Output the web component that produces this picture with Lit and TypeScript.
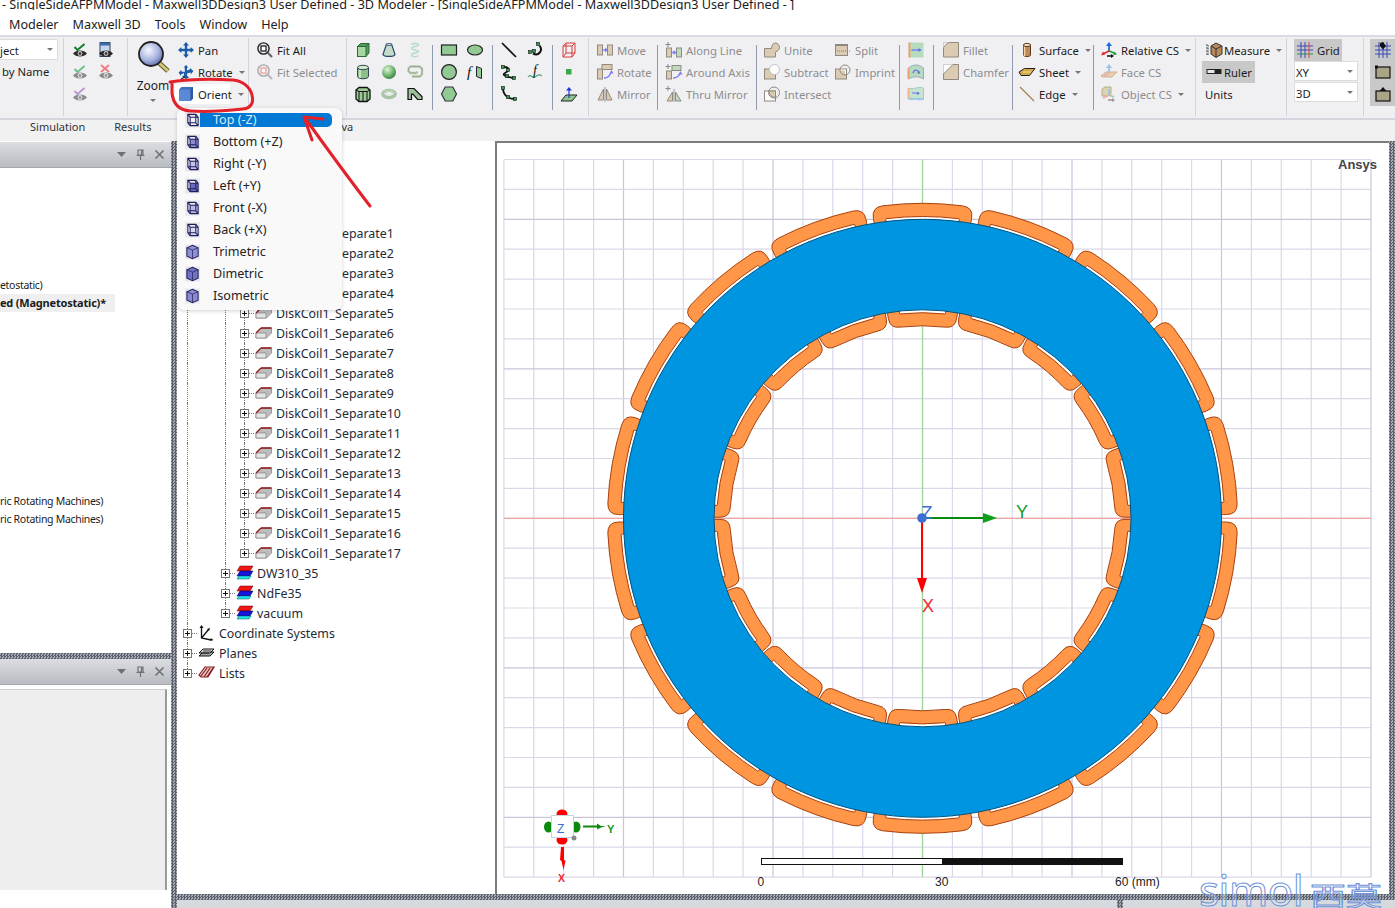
import { LitElement, html, css, svg, nothing, TemplateResult } from "lit";
import { customElement } from "lit/decorators.js";

// ---- ribbon icons, all on a 16x16 box ----
const eye = (c: string) => svg`<path d="M1 11.5c3-4 11-4 14 0c-3 4-11 4-14 0z" fill=${c}/><circle cx="8" cy="11.5" r="2.4" fill="#fff" opacity=".75"/><circle cx="8" cy="11.5" r="1.3" fill=${c}/>`;
const tick = (c: string) => svg`<path d="M2.5 5l3 3 7-6" fill="none" stroke=${c} stroke-width="2"/>`;
const TAN = "#d9c5a8";
const EDGE = "#80786c";
const ARW = "#6a6af0";
const box2 = (x: number, y: number, w: number, h: number, f = TAN) => svg`<rect x=${x} y=${y} width=${w} height=${h} fill=${f} stroke=${EDGE}/>`;
const node = (x: number, y: number) => svg`<rect x=${x - 1.5} y=${y - 1.5} width="3" height="3" fill="#2e9a4a" stroke="#111" stroke-width=".6"/>`;

const ICONS: Record<string, TemplateResult> = {
  eyeCheck: svg`${eye("#2a2a2a")}${tick("#0f7f2f")}`,
  eyeWin: svg`<rect x="2" y="0.5" width="10" height="14" fill="#c8d8ec" stroke="#345"/><rect x="2" y="0.5" width="10" height="3" fill="#3a6aa8"/>${eye("#2a2a2a")}`,
  eyeOk: svg`${eye("#8a8a8a")}${tick("#6fbf86")}`,
  eyeNo: svg`${eye("#8a8a8a")}<path d="M3 1l8 7M11 1l-8 7" stroke="#ef7f84" stroke-width="2"/>`,
  eyeMix: svg`${eye("#8a8a8a")}${tick("#b99ad0")}`,
  pan: svg`<path d="M8 0l3 3.4H9.2v3.4h3.4V5L16 8l-3.4 3v-1.8H9.2v3.4H11L8 16l-3-3.4h1.8V9.2H3.4V11L0 8l3.4-3v1.8h3.4V3.4H5z" fill="#1d5da8"/>`,
  rotate: svg`<path d="M8 1l2.4 2.6H9v3l3-1.4V4l3.4 3-2.6 3.4V8.6L9 9.4v2l2 2-3 1.6-4-2.4 2-1.4V9L3 10.4V12L.6 8.6 3.4 6v1.4l3.4.6V3.6H5.6z" fill="#1d5da8"/><path d="M3 15l4-2" stroke="#222" stroke-width="1.2"/>`,
  orient: svg`<path d="M1 3.5L3.5 1H15v11.5L12.5 15H1z" fill="#3d6fbf"/><path d="M1 3.5h11.5V15H1z" fill="#5a8ad6"/><path d="M12.5 3.5L15 1v11.5L12.5 15z" fill="#2f5a9e"/>`,
  fitAll: svg`<circle cx="6.5" cy="6.5" r="5.6" fill="#dfe6f2" stroke="#222" stroke-width="1.4"/><rect x="4" y="4" width="5" height="5" fill="#fff" stroke="#111" stroke-width="1.2"/><path d="M10.8 10.8l4.2 4.2" stroke="#666" stroke-width="2.2"/>`,
  fitSel: svg`<circle cx="6.5" cy="6.5" r="5.6" fill="#eef0f4" stroke="#9a9a9a" stroke-width="1.4"/><rect x="4" y="4" width="5" height="5" fill="#fff" stroke="#ea8c80" stroke-width="1.2"/><path d="M10.8 10.8l4.2 4.2" stroke="#b0b0b0" stroke-width="2.2"/>`,
  box: svg`<path d="M2.5 4.5L5.5 1.5H14V11L11 14.5H2.5z" fill="#4f9e5c" stroke="#2c6a3a"/><rect x="2.5" y="4.5" width="8.5" height="10" fill="#a8d6a0" stroke="#2c6a3a"/><path d="M11 4.5l3-3" stroke="#2c6a3a"/>`,
  cone: svg`<path d="M5.5 2h5l3.5 10.5c-1 2.6-11 2.6-12 0z" fill="#c6dccb" stroke="#27496a" stroke-width="1.2"/><ellipse cx="8" cy="2.6" rx="2.6" ry="1" fill="#e6f0e6" stroke="#27496a" stroke-width=".8"/>`,
  helix: svg`<path d="M4.5 2.5c3-2 7-1 7 .6s-7 1.4-7 3.2 7 1.4 7 3.2-7 1.4-7 3.2 4 2.8 7 1" fill="none" stroke="#b6dcc8" stroke-width="1.5"/>`,
  cyl: svg`<path d="M2.5 3.5v9c0 3 11 3 11 0v-9z" fill="#8dbf8a" stroke="#345" stroke-width="1"/><ellipse cx="8" cy="3.5" rx="5.5" ry="2.2" fill="#d4e8cf" stroke="#345"/><path d="M5 6v8" stroke="#d6ead2" stroke-width="1.6"/>`,
  sphere: svg`<circle cx="8" cy="8" r="7" fill="url(#ball)"/>`,
  spiral: svg`<path d="M5 12.5H13L15 10V4.5L12.5 2.5H3.5L1.5 4.5V7.5L3.5 9H9.5L10.5 7.5" fill="none" stroke="#b8c8ae" stroke-width="2.3"/><path d="M5 12.5H13L15 10V4.5L12.5 2.5H3.5L1.5 4.5V7.5L3.5 9H9.5" fill="none" stroke="#70806a" stroke-width=".4"/>`,
  prism: svg`<path d="M1 4l3-2.5h8l3 2.5v9l-3 2.5H4l-3-2.5z" fill="#9ccb98" stroke="#111" stroke-width="1.3"/><path d="M1 4l3 1.5h8l3-1.5M4 5.5v10M8 5.5v10M12 5.5v10" fill="none" stroke="#111" stroke-width="1"/>`,
  torus: svg`<ellipse cx="8" cy="8" rx="6.2" ry="3.6" fill="none" stroke="#a8c4a4" stroke-width="3.4"/><ellipse cx="8" cy="6.8" rx="5" ry="2" fill="none" stroke="#d6e6d2" stroke-width=".8"/>`,
  bond: svg`<path d="M1 2.5h6l8 8v3h-4.5L6 8.2H4.5v5.3H1z" fill="#9cc09a" stroke="#111" stroke-width="1.2"/>`,
  rect: svg`<rect x=".5" y="3" width="15" height="10" fill="#93c993" stroke="#222" stroke-width="1.2"/>`,
  ell: svg`<ellipse cx="8" cy="8" rx="7.5" ry="5" fill="#93c993" stroke="#222" stroke-width="1.2"/>`,
  circ: svg`<circle cx="8" cy="8" r="7.4" fill="#93c993" stroke="#222" stroke-width="1.2"/>`,
  hex: svg`<path d="M4.2 1h7.6L15.5 8l-3.7 7H4.2L.5 8z" fill="#93c993" stroke="#334" stroke-width="1.2"/>`,
  fsurf: svg`<path d="M9.5 2.5l5 2v10l-5-2z" fill="#93c993" stroke="#223"/><text x="0" y="13" font-family="Liberation Serif" font-style="italic" font-size="15" fill="#111">f</text>`,
  line: svg`<path d="M1 1l14 14" stroke="#111" stroke-width="1.7"/>`,
  arcA: svg`<path d="M12.5 3.5c4 5-1 11-6.5 8" fill="none" stroke="#111" stroke-width="2"/>${node(11, 2)}${node(3, 10)}${node(7, 9)}`,
  spline: svg`<path d="M3 3c6 0 5 4 1 6s2 4 8 5" fill="none" stroke="#111" stroke-width="1.8"/>${node(2, 3)}${node(7, 6)}${node(6, 12)}${node(13, 14)}`,
  fcurve: svg`<path d="M1 13c3-4 4 2 7 0s4-3 7-1" fill="none" stroke="#5aa06a" stroke-width="1.2"/><text x="6" y="11" font-family="Liberation Serif" font-style="italic" font-size="14" fill="#111">f</text>`,
  arcB: svg`<path d="M2 2c0 7 5 11 12 11" fill="none" stroke="#111" stroke-width="1.8"/>${node(2, 2)}${node(7, 11)}${node(14, 13)}`,
  wire: svg`<path d="M2 4l3-3h9v10l-3 4H2zM2 4h9v11M11 4l3-3M5 1v10l-3 4M5 11h9" fill="none" stroke="#d83a3a"/>`,
  dot: svg`<rect x="5" y="5" width="5.5" height="5.5" fill="#3da648"/>`,
  plane: svg`<path d="M5 9h11l-5 6H0z" fill="#8fc48f" stroke="#222"/><path d="M8 12V3" stroke="#1a3ae0" stroke-width="1.2"/><path d="M8 1l3 3.5H5z" fill="#1a3ae0"/>`,
  move: svg`${box2(.5, 3, 5, 10)}${box2(10.5, 3, 5, 10)}<path d="M5 8h5" stroke=${ARW} stroke-width="1.3"/><path d="M11 8L8 5.5v5z" fill=${ARW}/>`,
  rot: svg`${box2(.5, 5, 5, 10)}${box2(5, .5, 10, 5)}<path d="M7 14c4 0 6-2 7-6" fill="none" stroke=${ARW} stroke-width="1.3"/><path d="M14.5 6l2 3.5h-4z" fill=${ARW}/>`,
  mirror: svg`<path d="M1 14L6.5 3v11zM15 14L9.5 3v11z" fill=${TAN} stroke=${EDGE}/><path d="M8 1v15" stroke="#888"/>`,
  along: svg`<path d="M2 0v5M-.5 2.5h5" stroke="#777"/>${box2(.5, 6, 5, 9)}${box2(10.5, 6, 5, 9, "#b6d8b8")}<path d="M5 10.5h5" stroke=${ARW} stroke-width="1.3"/><path d="M10.5 10.5l-3-2.5v5z" fill=${ARW}/>`,
  around: svg`<path d="M2 0v5M-.5 2.5h5" stroke="#777"/>${box2(.5, 7, 5, 8)}${box2(6, 1.5, 9, 5, "#b6d8b8")}<path d="M7 14c4 0 6-2 7-5" fill="none" stroke=${ARW} stroke-width="1.3"/><path d="M14.5 7l2 3.5h-4z" fill=${ARW}/>`,
  thru: svg`<path d="M2 0v5M-.5 2.5h5" stroke="#777"/><path d="M1 15L6.5 6v9z" fill=${TAN} stroke=${EDGE}/><path d="M15 15L9.5 6v9z" fill="#b6d8b8" stroke=${EDGE}/><path d="M8 3v13" stroke="#888"/>`,
  unite: svg`<path d="M.5 6.5H7.5C7.5 3 9.5 1 11.5 1s4 2 4 4.5-2 3.5-4 4.5V15H.5z" fill=${TAN} stroke=${EDGE}/>`,
  subtract: svg`${box2(.5, 5, 11, 10)}<circle cx="10.5" cy="5.5" r="5" fill="#fff" stroke="#bbb"/>`,
  intersect: svg`<rect x=".5" y="5" width="11" height="10" fill="#fff" stroke=${EDGE}/><circle cx="10" cy="6.5" r="5.5" fill="none" stroke=${EDGE}/><path d="M5.5 5h6v6a5 5 0 0 1-6-6z" fill=${TAN} stroke=${EDGE}/>`,
  split: svg`<rect x=".5" y="2.5" width="12" height="11" fill=${TAN} stroke=${EDGE}/><path d="M0 9h15" stroke="#666" stroke-dasharray="1 1"/><rect x=".5" y="2.5" width="12" height="1.5" fill="#777"/>`,
  imprint: svg`${box2(.5, 5, 11, 10)}<circle cx="10" cy="6" r="5" fill="none" stroke=${EDGE}/><path d="M5.5 6h5v4" fill="none" stroke="#fff"/>`,
  sweepA: svg`<rect x=".5" y=".5" width="15" height="15" fill="#b6dcc0"/><rect x=".5" y=".5" width="2" height="15" fill="#f0a070"/><path d="M3.5 8h9" stroke=${ARW} stroke-width="1.2"/><path d="M13.5 8l-3-2v4z" fill=${ARW}/>`,
  sweepB: svg`<path d="M.5 4c5-4 10-4 15 0v11c-5-3-10-3-15 0z" fill="#b6dcc0" stroke="#9ab"/><path d="M.5 4v11" stroke="#f0a070" stroke-width="2"/><path d="M5 9c1-4 5-4 6 0" fill="none" stroke=${ARW} stroke-width="1.2"/><path d="M12 10l-3-1 2.5-2z" fill=${ARW}/>`,
  sweepC: svg`<path d="M.5 2c5 2 10-2 15 0v11c-5-2-10 2-15 0z" fill="#c6e4d0" stroke="#9cc"/><path d="M.5 2v11" stroke="#f0b488" stroke-width="2"/><path d="M4 7h7" stroke=${ARW}/><path d="M12 7.5l-3-1.5v3z" fill=${ARW}/><path d="M.5 13c5-2 10 2 15 0" stroke="#9cc8ef" fill="none" stroke-width="1.5"/>`,
  fillet: svg`<rect x=".5" y=".5" width="4" height="4" fill="#eee" stroke="#ccc"/><path d="M.5 15V5.5C3 3 4 .5 7 .5h8.5V15z" fill=${TAN} stroke=${EDGE}/>`,
  chamfer: svg`<rect x=".5" y=".5" width="15" height="15" fill="#fff" stroke="#ccc"/><path d="M.5 15.500V10L10 .5h5.500v15z" fill=${TAN} stroke=${EDGE}/>`,
  surface: svg`<path d="M4.5 3v10c0 2 7 2 7 0V3z" fill="#c08a58" stroke="#5a3a20"/><path d="M5.5 4v10" stroke="#f0d0a8" stroke-width="1.5"/><ellipse cx="8" cy="3" rx="3.5" ry="1.6" fill="#efe0c8" stroke="#5a3a20"/>`,
  sheet: svg`<path d="M0 8L5.5 4.5H16L10.5 11.5H2z" fill="#d6a94a" stroke="#222"/><path d="M4 8h8" stroke="#f2dc96"/>`,
  edge: svg`<path d="M1 1l14 14" stroke="#a4805a" stroke-width="1.3"/>`,
  relCs: svg`<path d="M8 9V3" stroke="#1a6ae0" stroke-width="1.8"/><path d="M8 0l3 4H5z" fill="#1a6ae0"/><path d="M8 9L2 12" stroke="#e02828" stroke-width="1.8"/><path d="M0 13.5l2-4 2 3z" fill="#e02828"/><path d="M8 9l5 2" stroke="#1f9a3a" stroke-width="1.8"/><path d="M16 12.5l-4 .5 1.5-3.5z" fill="#1f9a3a"/><path d="M6 14h5" stroke="#111" stroke-width="1.5"/><path d="M13 14l-3-2v4z" fill="#111"/>`,
  faceCs: svg`<path d="M0 12l5-4h11l-5 5H2z" fill="#e8c8a4" stroke="#c8a880"/><path d="M8 9V3" stroke="#8abcf0" stroke-width="1.8"/><path d="M8 0l3 4H5z" fill="#8abcf0"/><path d="M8 9l-5 3" stroke="#f0a0a0" stroke-width="1.6"/>`,
  objCs: svg`<path d="M1 3l3-2h6v7l-3 2H1z" fill="#d8d0a0" stroke="#a8a478"/><path d="M8 9V3" stroke="#8abcf0" stroke-width="1.8"/><path d="M8 9l-6 3" stroke="#f0a0a0" stroke-width="1.8"/><path d="M8 9l5 2" stroke="#8ac89a" stroke-width="1.8"/><path d="M7 14h5" stroke="#888" stroke-width="1.5"/><path d="M14 14l-3-2v4z" fill="#888"/>`,
  measure: svg`<path d="M5 4l5-3 6 3v8l-6 3.5L5 12z" fill="#b8875a" stroke="#333"/><path d="M5 4l5 3 6-3M10 7v8" fill="none" stroke="#333"/><path d="M2 3v10M0 3h2M0 6h2M0 9h2M0 12h2" stroke="#333" stroke-dasharray="1 .5"/>`,
  ruler: svg`<rect x="0.5" y="5" width="15" height="5" fill="#222"/><rect x="1.5" y="6" width="7" height="3" fill="#e8e8e8"/>`,
  grid: svg`<path d="M0 4h16M0 8h16" stroke="#3a4ab8"/><path d="M0 12h16" stroke="#2e9a4a"/><path d="M4 0v16M8 0v16" stroke="#3a4ab8"/><path d="M12 0v16" stroke="#e04040"/>`,
  gridPt: svg`<path d="M0 4h16M0 8h16M0 12h16M4 0v16M8 0v16M12 0v16" stroke="#3a4ab8"/><path d="M5 1l3-1 3 4-3 3.5-3-3.5z" fill="#111"/>`,
  boxTop: svg`<rect x="1" y="3" width="14" height="11" fill="#a8a484" stroke="#111" stroke-width="1.2"/><rect x="0" y="1.5" width="3" height="3" fill="#111"/>`,
  boxUp: svg`<rect x="1" y="5" width="14" height="10" fill="#a8a484" stroke="#111" stroke-width="1.2"/><path d="M8 1l3.5 4h-7z" fill="#111"/>`,
};

// ---- orient menu cubes ----
const cube = (face: string, solid = false) => html`<svg class="cube" viewBox="0 0 16 16">
  <rect width="16" height="16" fill="#e8e8ee"/>
  ${solid
    ? svg`<path d="M8 .8l6 2.7v9L8 15.2l-6-2.7v-9z" fill=${face} stroke="#24245e" stroke-width="1.1"/><path d="M2 3.5L8 6l6-2.5M8 6v9" fill="none" stroke="#24245e" stroke-width=".8"/>`
    : svg`<path d="M5.5 5H14v9H5.5z" fill=${face}/><path d="M3 2h8.5L14 5v9H5.5L3 11zM5.5 5H14M5.5 5v9M5.5 5L3 2M3 11h8.5V2M11.5 11l2.5 3" fill="none" stroke="#1e1e5c" stroke-width="1.1"/>`}
</svg>`;
const VIEWS: [string, string, boolean][] = [
  ["Top (-Z)", "#f0f0fa", false],
  ["Bottom (+Z)", "#8c8cd0", false],
  ["Right (-Y)", "#c4c4ea", false],
  ["Left (+Y)", "#6a6ac0", false],
  ["Front (-X)", "#b8b8e6", false],
  ["Back (+X)", "#d8d8f0", false],
  ["Trimetric", "#8f8fd4", true],
  ["Dimetric", "#7272c4", true],
  ["Isometric", "#8a8ad0", true],
];

// ---- project tree ----
type Row = { depth: number; label: string; icon: string };
const treeRows: Row[] = [
  ...Array.from({ length: 17 }, (_, i) => ({ depth: 3, label: `DiskCoil1_Separate${i + 1}`, icon: "coil" })),
  { depth: 2, label: "DW310_35", icon: "mat" },
  { depth: 2, label: "NdFe35", icon: "mat" },
  { depth: 2, label: "vacuum", icon: "mat" },
  { depth: 0, label: "Coordinate Systems", icon: "cs" },
  { depth: 0, label: "Planes", icon: "planes" },
  { depth: 0, label: "Lists", icon: "lists" },
];
const TREE_ICONS: Record<string, TemplateResult> = {
  coil: svg`<path d="M1 13V8l5-5h10.5v5l-5 5z" fill="#bdbdbd" stroke="#8a8a8a" stroke-width=".8"/><path d="M1 8h10v5H1z" fill="#e4e4e4" stroke="#8a8a8a" stroke-width=".8"/><path d="M6 3h10.5" stroke="#8e1414" stroke-width="1.5"/><path d="M1 8l5-5" stroke="#8e1414" stroke-width="1.2"/>`,
  mat: svg`<path d="M4 1h13l-3 5H1z" fill="#f01414" stroke="#600" stroke-width=".5"/><path d="M4 6h13l-3 5H1z" fill="#1414e0" stroke="#004" stroke-width=".5"/><path d="M3 11h12l-2 3H1z" fill="#1ee6ee" stroke="#055" stroke-width=".5"/>`,
  cs: svg`<path d="M3.5 1v12L13 15M3.5 13L11 4" fill="none" stroke="#111" stroke-width="1.3"/><path d="M3.5 0l-2 3h4zM15.5 15l-3-2v3zM12 3l-3 1 2 2z" fill="#111"/>`,
  planes: svg`<path d="M1 11l4-4h11l-4 4z" fill="#aaa" stroke="#111"/><path d="M1 8l4-4h11l-4 4z" fill="#ddd" stroke="#111"/><path d="M3 8h8M5 6h8" stroke="#111" stroke-width=".8"/>`,
  lists: svg`<path d="M1 10l6-8h9l-6 10H3z" fill="#e8c8c8" stroke="#8a1c1c" stroke-width="1.2"/><path d="M3 11l6-8M6 12l6-9M9 12l6-9" stroke="#8a1c1c" stroke-width="1.2"/>`,
};

// ---- model geometry, in page coordinates ----
const CX = 922.5;
const CY = 518.3;
const P = (r: number, a: number) => `${(CX + r * Math.sin(a)).toFixed(2)} ${(CY - r * Math.cos(a)).toFixed(2)}`;
const sector = (r1: number, r2: number, a0: number, a1: number, c: number) =>
  `M${P(r2 - c, a0)}Q${P(r2, a0)} ${P(r2, a0 + c / r2)}A${r2} ${r2} 0 0 1 ${P(r2, a1 - c / r2)}Q${P(r2, a1)} ${P(r2 - c, a1)}` +
  `L${P(r1 + c, a1)}Q${P(r1, a1)} ${P(r1, a1 - c / r1)}A${r1} ${r1} 0 0 0 ${P(r1, a0 + c / r1)}Q${P(r1, a0)} ${P(r1 + c, a0)}Z`;
const rad = (d: number) => (d * Math.PI) / 180;
const coilAngles = Array.from({ length: 18 }, (_, i) => i * 20);
const STEP = 29.9;

const tool = (icon: string, label?: string, o: { dim?: boolean; caret?: boolean; cls?: string } = {}) => html`
  <div class="tool ${o.dim ? "dim" : ""} ${o.cls ?? ""}">
    <svg class="ic" viewBox="0 0 16 16">${ICONS[icon]}</svg>
    ${label ? html`<span class="lb">${label}</span>` : nothing}
    ${o.caret ? html`<i class="caret"></i>` : nothing}
  </div>`;
const iconCol = (...names: string[]) => html`<div class="col ico-col">${names.map((n) => (n ? tool(n) : html`<div class="tool"></div>`))}</div>`;
const sep = (dark = true) => html`<div class="sep ${dark ? "dark" : "light"}"></div>`;

@customElement("app-root")
export class AppRoot extends LitElement {
  static styles = css`
    :host {
      display: block;
      position: relative;
      width: 1395px;
      height: 908px;
      overflow: hidden;
      background: #fff;
      color: #1c1c1c;
      font-family: "Noto Sans", "Noto Sans CJK SC", sans-serif;
      font-size: 11.3px;
    }
    .title {
      height: 10px;
      overflow: hidden;
      font-size: 12.65px;
      line-height: 9px;
      padding-left: 2px;
      white-space: nowrap;
    }
    .menu {
      height: 25px;
      box-sizing: border-box;
      padding: 3px 0 0 9px;
      display: flex;
      align-items: center;
      font-size: 12.6px;
      gap: 14px;
    }
    .ribbon {
      height: 85px;
      box-sizing: border-box;
      padding-top: 2px;
      display: flex;
      background: #f0f0f3;
      border-top: 2px solid #dcdae3;
      border-bottom: 2px solid #d6d4de;
      overflow: hidden;
    }
    .sec {
      flex: none;
      display: flex;
      height: 67px;
      box-sizing: border-box;
    }
    .col {
      flex: none;
      display: flex;
      flex-direction: column;
    }
    .ico-col {
      width: 26px;
    }
    .tool {
      height: 22px;
      display: flex;
      align-items: center;
      white-space: nowrap;
    }
    .ic {
      flex: none;
      width: 16px;
      height: 16px;
      overflow: visible;
    }
    .lb {
      margin-left: 4px;
    }
    .dim {
      color: #8d8d8f;
    }
    .tool.dim .ic {
      opacity: 0.85;
    }
    .caret {
      width: 0;
      height: 0;
      margin-left: 6px;
      margin-top: 1px;
      border-left: 3px solid transparent;
      border-right: 3px solid transparent;
      border-top: 3px solid #777;
    }
    .sep {
      flex: none;
      width: 1px;
    }
    .sep.dark {
      height: 65px;
      margin-top: 6px;
      background: #8f9aae;
    }
    .sep.light {
      height: 78px;
      margin-top: -1px;
      background: #cfd3da;
    }
    .combo {
      height: 21px;
      box-sizing: border-box;
      display: flex;
      align-items: center;
      justify-content: space-between;
      background: #fff;
      border: 1px solid #dcdcdc;
      border-left: none;
      padding-right: 4px;
    }
    .combo span {
      margin-top: 2px;
    }
    .combo.small {
      width: 64px;
      height: 20px;
      border-left: 1px solid #dcdcdc;
      padding-left: 1px;
      margin-bottom: 1px;
    }
    .combo .caret {
      margin: 0;
    }
    .plain {
      height: 22px;
      display: flex;
      align-items: center;
      padding-left: 2px;
    }
    .zoom {
      width: 50px;
      align-items: center;
    }
    .zoom svg {
      width: 32px;
      height: 32px;
      margin-top: 2px;
      margin-left: 1px;
    }
    .zoom span {
      margin-top: 5px;
      font-size: 12px;
      line-height: 16px;
    }
    .zoom .caret {
      margin: 5px 0 0;
    }
    .white {
      background: #fff;
      margin-left: -3px;
      padding-left: 3px;
      width: 52px;
      height: 20px;
      margin-top: 1px;
    }
    .on {
      background: #c8c8c8;
    }
    .tool.ruler {
      width: 53px;
      padding-left: 4px;
      box-sizing: border-box;
    }
    .tool.ruler .lb,
    .tool.meas .lb {
      margin-left: 2px;
    }
    .tool.meas {
      padding-left: 4px;
    }
    .tool.grid {
      width: 48px;
      padding-left: 3px;
      box-sizing: border-box;
    }
    .stack {
      margin-left: 6px;
      width: 25px;
      align-items: center;
      background: #c8c8c8;
    }
    .tabs {
      height: 21px;
      display: flex;
      line-height: 14px;
      background: #f1f1f2;
      padding-left: 30px;
      color: #333;
      font-size: 11px;
    }
    .tabs span + span {
      margin-left: 29px;
    }
    .tabs span.far {
      margin-left: 190px;
    }
    .main {
      display: flex;
      height: 767px;
    }
    .hatch-v,
    .hatch-h {
      flex: none;
      background: conic-gradient(#5b6070 25%, #a8abb0 0 50%, #5b6070 0 75%, #a8abb0 0) 0 0 / 3px 3px;
    }
    .hatch-v {
      width: 6px;
    }
    .hatch-h {
      height: 6px;
    }
    .left {
      width: 171px;
      flex: none;
      display: flex;
      flex-direction: column;
      padding-top: 1px;
      box-sizing: border-box;
    }
    .phead {
      flex: none;
      height: 26px;
      box-sizing: border-box;
      display: flex;
      align-items: center;
      justify-content: flex-end;
      gap: 8px;
      padding-right: 6px;
      background: linear-gradient(#dbdde1, #b8bbc1);
      border-bottom: 1px solid #a6a7ab;
    }
    .phead svg {
      width: 11px;
      height: 11px;
    }
    .pbody {
      height: 485px;
      flex: none;
      overflow: hidden;
      font-size: 10.5px;
      padding-top: 108px;
      box-sizing: border-box;
      white-space: nowrap;
    }
    .pl {
      height: 18px;
      line-height: 18px;
      letter-spacing: -0.3px;
    }
    .pl.cur {
      width: 115px;
      background: #efefef;
      font-weight: 700;
      font-size: 11px;
      letter-spacing: -0.2px;
    }
    .pl.gapped {
      margin-top: 180px;
    }
    .pbody2 {
      flex: 1;
      padding: 4px 4px 0 0;
    }
    .pbody2 div {
      height: 200px;
      background: #eee;
      border-top: 1px solid #d0d0d0;
      border-right: 2px solid #9a9a9a;
    }
    .center {
      flex: 1;
      display: flex;
      flex-direction: column;
      min-width: 0;
    }
    .work {
      flex: none;
      height: 753px;
      display: flex;
    }
    .tree {
      width: 318px;
      flex: none;
      box-sizing: border-box;
      padding: 82px 0 0 1px;
      overflow: hidden;
      font-size: 12.4px;
      color: #1f2a38;
    }
    .row {
      height: 20px;
      display: flex;
      align-items: center;
    }
    .cell {
      flex: none;
      width: 19px;
      height: 20px;
      position: relative;
      box-sizing: border-box;
    }
    .cell.guide::before,
    .cell.stub::before {
      content: "";
      position: absolute;
      left: 9px;
      top: 0;
      bottom: 0;
      border-left: 1px dotted #777;
    }
    .cell.stub.end::before {
      bottom: 10px;
    }
    .cell.stub::after {
      content: "";
      position: absolute;
      left: 13px;
      right: 0;
      top: 10px;
      border-top: 1px dotted #777;
    }
    .exp {
      position: absolute;
      left: 5px;
      top: 6px;
      width: 9px;
      height: 9px;
      z-index: 1;
      box-sizing: border-box;
      border: 1px solid #777;
      background: linear-gradient(#111, #111) center / 5px 1px no-repeat, linear-gradient(#111, #111) center / 1px 5px no-repeat, #fff;
    }
    .ti {
      flex: none;
      width: 17px;
      height: 16px;
      margin-left: 1px;
      overflow: visible;
    }
    .tx {
      margin-left: 4px;
      white-space: nowrap;
    }
    .view {
      flex: none;
      width: 894px;
      box-sizing: border-box;
      border-left: 2px solid #7c7c7c;
      border-top: 2px solid #7c7c7c;
      background: #fff;
    }
    .view svg {
      display: block;
    }
    .foot {
      flex: 1;
      background: #d6d9de;
      display: flex;
      padding-left: 940px;
    }
    .omenu {
      position: absolute;
      z-index: 5;
      left: 177px;
      top: 108px;
      width: 165px;
      height: 202px;
      box-sizing: border-box;
      padding-top: 1px;
      background: #f9f9f9;
      border-radius: 7px;
      box-shadow: 0 1px 4px rgba(0, 0, 0, 0.18);
      font-size: 12.6px;
      color: #222;
    }
    .mi {
      height: 22px;
      display: flex;
      align-items: center;
      padding-left: 8px;
    }
    .cube {
      flex: none;
      width: 15px;
      height: 16px;
    }
    .mt {
      margin-left: 13px;
      width: 119px;
      height: 14px;
      line-height: 13px;
      white-space: nowrap;
    }
    .mi.sel .mt {
      margin-left: 0;
      width: 119px;
      padding-left: 13px;
      background: #0078d4;
      color: #d6ebff;
      border-radius: 0 5px 5px 0;
    }
    .marks {
      position: absolute;
      z-index: 6;
      left: 0;
      top: 0;
      pointer-events: none;
    }
    .wm {
      position: absolute;
      z-index: 6;
      left: 1199px;
      top: 861px;
      display: flex;
      align-items: baseline;
      gap: 7px;
      color: rgba(255, 255, 255, 0.25);
      -webkit-text-stroke: 1px #6f93d8;
      line-height: 44px;
    }
    .wm b {
      font: 400 42px "Noto Sans", sans-serif;
      letter-spacing: -0.5px;
    }
    .wm em {
      display: inline-block;
      font: 400 26px "Noto Sans CJK SC", sans-serif;
      transform: scaleX(1.38);
      transform-origin: left bottom;
    }
  `;

  renderRibbon() {
    return html`<div class="ribbon">
      <div class="sec" style="width:63px">
        <div class="col" style="width:58px">
          <div class="combo"><span>ject</span><i class="caret"></i></div>
          <div class="plain">by Name</div>
        </div>
      </div>
      ${sep(false)}
      <div class="sec" style="width:63px;padding-left:8px">
        ${iconCol("eyeCheck", "eyeOk", "eyeMix")}${iconCol("eyeWin", "eyeNo", "")}
      </div>
      ${sep(false)}
      <div class="sec" style="width:120px">
        <div class="col zoom">
          <svg viewBox="0 0 32 32">
            <defs>
              <radialGradient id="glass" cx=".4" cy=".35" r=".7"><stop offset="0" stop-color="#f4f6ff"/><stop offset=".6" stop-color="#a8b4e0"/><stop offset="1" stop-color="#5a68a8"/></radialGradient>
              <radialGradient id="ball" cx=".38" cy=".32" r=".75"><stop offset="0" stop-color="#e0f4dc"/><stop offset=".5" stop-color="#7fbf7a"/><stop offset="1" stop-color="#2f7a3c"/></radialGradient>
            </defs>
            <path d="M19 20l11 10" stroke="#5a5a20" stroke-width="5"/><path d="M19 20l11 10" stroke="#d4c878" stroke-width="3"/>
            <circle cx="13" cy="13" r="12" fill="url(#glass)" stroke="#222" stroke-width="1.8"/>
          </svg>
          <span>Zoom</span><i class="caret"></i>
        </div>
        <div class="col">
          ${tool("pan", "Pan")}${tool("rotate", "Rotate", { caret: true })}${tool("orient", "Orient", { caret: true, cls: "white" })}
        </div>
      </div>
      ${sep(false)}
      <div class="sec" style="width:97px;padding-left:8px">
        <div class="col">${tool("fitAll", "Fit All")}${tool("fitSel", "Fit Selected", { dim: true })}</div>
      </div>
      ${sep(false)}
      <div class="sec" style="width:85px;padding-left:8px">
        ${iconCol("box", "cyl", "prism")}${iconCol("cone", "sphere", "torus")}${iconCol("helix", "spiral", "bond")}
      </div>
      ${sep()}
      <div class="sec" style="width:59px;padding-left:8px">${iconCol("rect", "circ", "hex")}${iconCol("ell", "fsurf", "")}</div>
      ${sep()}
      <div class="sec" style="width:59px;padding-left:8px">${iconCol("line", "spline", "arcB")}${iconCol("arcA", "fcurve", "")}</div>
      ${sep()}
      <div class="sec" style="width:35px;padding-left:8px">${iconCol("wire", "dot", "plane")}</div>
      ${sep(false)}
      <div class="sec" style="width:68px;padding-left:8px">
        <div class="col">${tool("move", "Move", { dim: true })}${tool("rot", "Rotate", { dim: true })}${tool("mirror", "Mirror", { dim: true })}</div>
      </div>
      ${sep()}
      <div class="sec" style="width:98px;padding-left:8px">
        <div class="col">${tool("along", "Along Line", { dim: true })}${tool("around", "Around Axis", { dim: true })}${tool("thru", "Thru Mirror", { dim: true })}</div>
      </div>
      ${sep()}
      <div class="sec" style="width:142px;padding-left:7px">
        <div class="col" style="width:71px">${tool("unite", "Unite", { dim: true })}${tool("subtract", "Subtract", { dim: true })}${tool("intersect", "Intersect", { dim: true })}</div>
        <div class="col">${tool("split", "Split", { dim: true })}${tool("imprint", "Imprint", { dim: true })}</div>
      </div>
      ${sep()}
      <div class="sec" style="width:33px;padding-left:8px">${iconCol("sweepA", "sweepB", "sweepC")}</div>
      ${sep()}
      <div class="sec" style="width:78px;padding-left:9px">
        <div class="col">${tool("fillet", "Fillet", { dim: true })}${tool("chamfer", "Chamfer", { dim: true })}</div>
      </div>
      ${sep()}
      <div class="sec" style="width:80px;padding-left:6px">
        <div class="col">${tool("surface", "Surface", { caret: true })}${tool("sheet", "Sheet", { caret: true })}${tool("edge", "Edge", { caret: true })}</div>
      </div>
      ${sep()}
      <div class="sec" style="width:101px;padding-left:7px">
        <div class="col">${tool("relCs", "Relative CS", { caret: true })}${tool("faceCs", "Face CS", { dim: true })}${tool("objCs", "Object CS", { dim: true, caret: true })}</div>
      </div>
      ${sep(false)}
      <div class="sec" style="width:90px;padding-left:6px">
        <div class="col">
          ${tool("measure", "Measure", { caret: true, cls: "meas" })}${tool("ruler", "Ruler", { cls: "ruler on" })}
          <div class="plain" style="padding-left:3px">Units</div>
        </div>
      </div>
      ${sep(false)}
      <div class="sec" style="width:76px;padding-left:7px">
        <div class="col">
          ${tool("grid", "Grid", { cls: "grid on" })}
          <div class="combo small"><span>XY</span><i class="caret"></i></div>
          <div class="combo small"><span>3D</span><i class="caret"></i></div>
        </div>
      </div>
      ${sep(false)}
      <div class="sec"><div class="col stack">${tool("gridPt")}${tool("boxTop")}${tool("boxUp")}</div></div>
    </div>`;
  }

  renderTree() {
    return html`<div class="tree">
      ${treeRows.map((r, i) => {
        const next = treeRows[i + 1];
        const end = !next || next.depth < r.depth;
        return html`<div class="row">
          ${[0, 1, 2].slice(0, r.depth).map((c) => html`<div class="cell ${c === 0 || c === 2 ? "guide" : ""}"></div>`)}
          <div class="cell stub ${end ? "end" : ""}"><span class="exp"></span></div>
          <svg class="ti" viewBox="0 0 17 16">${TREE_ICONS[r.icon]}</svg>
          <span class="tx">${r.label}</span>
        </div>`;
      })}
    </div>`;
  }

  renderView() {
    const xs = Array.from({ length: 30 }, (_, i) => i - 14);
    const ys = Array.from({ length: 25 }, (_, i) => i - 12);
    const x0 = CX - 14 * STEP;
    const x1 = CX + 15 * STEP;
    const y0 = CY - 12 * STEP;
    const y1 = CY + 12 * STEP;
    return html`<div class="view">
      <svg width="892" height="751" viewBox="497 143 892 751" font-family="Liberation Sans, sans-serif">
        <g stroke-width="1.2">
          ${xs.map((k) => svg`<line x1=${CX + k * STEP} x2=${CX + k * STEP} y1=${y0} y2=${y1} stroke=${k % 5 === 0 ? "#c8c5da" : "#dad8e8"}/>`)}
          ${ys.map((k) => svg`<line y1=${CY + k * STEP} y2=${CY + k * STEP} x1=${x0} x2=${x1} stroke=${k % 5 === 0 ? "#c8c5da" : "#dad8e8"}/>`)}
        </g>
        <line x1=${x0} x2=${x1} y1=${CY} y2=${CY} stroke="#efa6a0" stroke-width="1.2"/>
        <line x1=${CX} x2=${CX} y1=${y0} y2=${y1} stroke="#a2d29c" stroke-width="1.2"/>

        <g fill="#ff9648" stroke="#a8400c" stroke-width="1">
          ${coilAngles.map((a) => svg`<path d=${sector(290, 315, rad(a - 9.3), rad(a + 9.3), 11)}/>`)}
          ${coilAngles.map((a) => svg`<path d=${sector(192.5, 218, rad(a - 9.7), rad(a + 9.7), 10)}/>`)}
          ${coilAngles.map((a) => svg`<path fill="#fff" d=${sector(296, 301.8, rad(a - 7), rad(a + 7), 0.5)}/>`)}
          ${coilAngles.map((a) => svg`<path fill="#fff" d=${sector(205.6, 212, rad(a - 6.4), rad(a + 6.4), 0.5)}/>`)}
        </g>
        <path fill-rule="evenodd" fill="#0095e0" stroke="#00527e" stroke-width="1"
          d="M${CX - 299} ${CY}a299 299 0 1 0 598 0a299 299 0 1 0 -598 0zM${CX - 208.5} ${CY}a208.5 208.5 0 1 0 417 0a208.5 208.5 0 1 0 -417 0z"/>

        <line x1="922" x2="922" y1="518" y2="582" stroke="#f00" stroke-width="2"/>
        <path d="M917 578h10l-5 15z" fill="#f00"/>
        <line x1="922" x2="986" y1="518" y2="518" stroke="#0a8a0a" stroke-width="2"/>
        <path d="M983 513v10l14-5z" fill="#0fa01a"/>
        <circle cx="922" cy="518" r="4.8" fill="#3d6fd2"/>
        <text x="921" y="519" font-size="19" fill="#3d6fd2">Z</text>
        <text x="1016" y="518" font-size="18" fill="#16992a">Y</text>
        <text x="922" y="612" font-size="18" fill="#f0282c">X</text>
        <text x="1338" y="169" font-size="13" font-weight="700" fill="#444">Ansys</text>

        <ellipse cx="562" cy="814" rx="5.5" ry="4.5" fill="#f00"/>
        <ellipse cx="562" cy="840" rx="5.5" ry="4.5" fill="#f00"/>
        <ellipse cx="548.5" cy="827" rx="4.5" ry="5.5" fill="#0a8a0a"/>
        <ellipse cx="576" cy="827" rx="4.5" ry="5.5" fill="#0a8a0a"/>
        <rect x="551.5" y="815.5" width="22" height="22" fill="#fff" stroke="#c8d4e0" stroke-width="1"/>
        <text x="557" y="833" font-size="12" fill="#3d6fd2">Z</text>
        <circle cx="574" cy="838" r="2.5" fill="#888"/>
        <path d="M583 825.5h14v-2l4 2.5h5l-5 1.5-4 2v-2h-14z" fill="#0a8a0a"/>
        <text x="607" y="833" font-size="11" font-weight="700" fill="#16992a">Y</text>
        <path d="M561 847h3v13l1.5 1-2 9-2-9 -1.5-1z" fill="#f00"/>
        <text x="558" y="882" font-size="10.5" font-weight="700" fill="#f0282c">X</text>

        <rect x="761.5" y="858.5" width="181" height="6" fill="#fff" stroke="#111"/>
        <rect x="942" y="858" width="181" height="7" fill="#111"/>
        <g font-size="12" fill="#222">
          <text x="757.5" y="886">0</text>
          <text x="935" y="886">30</text>
          <text x="1115" y="886">60 (mm)</text>
        </g>
      </svg>
    </div>`;
  }

  headIcons() {
    return html`
      <svg viewBox="0 0 11 11"><path d="M1 3h9L5.5 8z" fill="#6e7076"/></svg>
      <svg viewBox="0 0 11 11"><path d="M3 1h5v5H3zM1.5 6.5h8M5.5 6.5V11M6.5 1v5" fill="none" stroke="#6e7076" stroke-width="1.2"/></svg>
      <svg viewBox="0 0 11 11"><path d="M1.5 1.5l8 8M9.5 1.5l-8 8" stroke="#6e7076" stroke-width="1.6"/></svg>
    `;
  }

  render() {
    return html`
      <div class="title">- SingleSideAFPMModel - Maxwell3DDesign3 User Defined - 3D Modeler - [SingleSideAFPMModel - Maxwell3DDesign3 User Defined - ]</div>
      <div class="menu"><span>Modeler</span><span>Maxwell 3D</span><span>Tools</span><span>Window</span><span>Help</span></div>
      ${this.renderRibbon()}
      <div class="tabs"><span>Simulation</span><span>Results</span><span class="far">va</span></div>
      <div class="main">
        <div class="left">
          <div class="phead">${this.headIcons()}</div>
          <div class="pbody">
            <div class="pl">etostatic)</div>
            <div class="pl cur">ed (Magnetostatic)*</div>
            <div class="pl gapped">ric Rotating Machines)</div>
            <div class="pl">ric Rotating Machines)</div>
          </div>
          <div class="hatch-h"></div>
          <div class="phead">${this.headIcons()}</div>
          <div class="pbody2"><div></div></div>
        </div>
        <div class="hatch-v"></div>
        <div class="center">
          <div class="work">
            ${this.renderTree()}
            ${this.renderView()}
            <div class="hatch-v"></div>
          </div>
          <div class="hatch-h"></div>
          <div class="foot"><div class="hatch-v"></div></div>
        </div>
      </div>

      <div class="omenu">
        ${VIEWS.map(([label, face, solid], i) => html`<div class="mi ${i === 0 ? "sel" : ""}">${cube(face, solid)}<span class="mt">${label}</span></div>`)}
      </div>

      <svg class="marks" width="1395" height="908" fill="none" stroke="#e2212b" stroke-width="3" stroke-linecap="round" stroke-linejoin="round">
        <path d="M170 82C190 79 215 79 233 80C243 81 250 87 252 95C254 103 251 108 243 109C225 111 205 112 190 111C178 110 173 103 172 93L172 83"/>
        <path d="M370 206C350 180 328 150 305 118"/>
        <path d="M304 117L323 119M304 117L312 140"/>
      </svg>
      <div class="wm"><b>simol</b><em>西莫</em></div>
    `;
  }
}
